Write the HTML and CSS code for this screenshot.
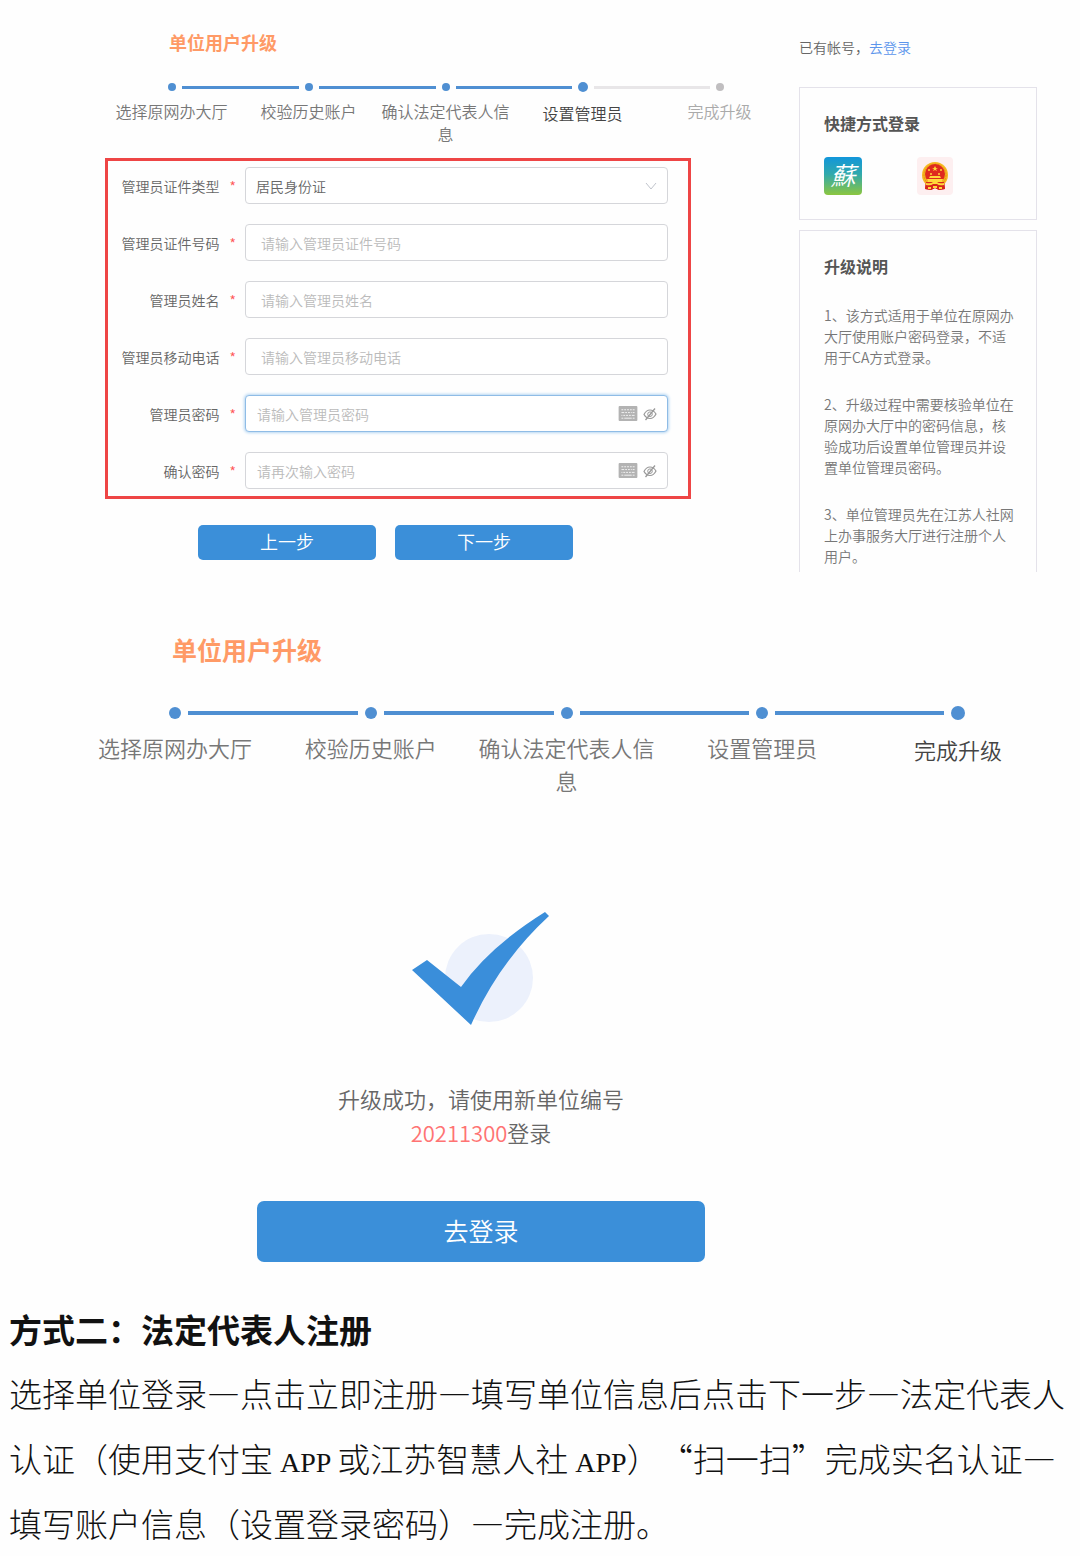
FILE: index.html
```html
<!DOCTYPE html>
<html lang="zh-CN">
<head>
  <meta charset="UTF-8">
  <meta name="viewport" content="width=device-width, initial-scale=1.0">
  <title>单位用户升级</title>
  <link rel="stylesheet" href="styles.css">
</head>
<body>
  <!-- 共用图标 -->
  <svg class="sprite" aria-hidden="true">
    <symbol id="icon-keyboard" viewBox="0 0 20 16">
      <rect x="0" y="0" width="20" height="16" rx="1" fill="#b3b3b3"/>
      <path d="M3 4h2M6 4h2M9 4h2M12 4h2M15 4h2M3 7h3M7 7h2M10 7h2M13 7h1M15 7h2M3 10h1M5 10h2M8 10h2M11 10h2M14 10h3M3 13h2M6 13h8M15 13h2" stroke="#f4f4f4" stroke-width="1" fill="none"/>
    </symbol>
    <symbol id="icon-eye-off" viewBox="0 0 14 14">
      <path d="M1 7.500C2.500 4.500 4.500 3 7 3s4.500 1.500 6 4c-1.500 3-3.500 4.500-6 4.500S2.500 10 1 7.500z" fill="none" stroke="#999" stroke-width="1.200"/>
      <circle cx="7" cy="7.200" r="2.300" fill="none" stroke="#999"/>
      <path d="M2.500 13L12 1.500" stroke="#999" stroke-width="1.300"/>
    </symbol>
  </svg>

  <section class="upgrade">
    <main class="upgrade-main">
      <h2 class="title">单位用户升级</h2>
      <ol class="steps">
        <li class="step"><div class="marker"><i class="line"></i><i class="dot"></i><i class="line"></i></div><span class="step-name">选择原网办大厅</span></li>
        <li class="step"><div class="marker"><i class="line"></i><i class="dot"></i><i class="line"></i></div><span class="step-name">校验历史账户</span></li>
        <li class="step"><div class="marker"><i class="line"></i><i class="dot"></i><i class="line"></i></div><span class="step-name">确认法定代表人信息</span></li>
        <li class="step current"><div class="marker"><i class="line"></i><i class="dot"></i><i class="line"></i></div><span class="step-name">设置管理员</span></li>
        <li class="step todo"><div class="marker"><i class="line"></i><i class="dot"></i><i class="line"></i></div><span class="step-name">完成升级</span></li>
      </ol>

      <form class="admin-form">
        <div class="fields">
          <div class="row">
            <label for="idType">管理员证件类型<span class="star">*</span></label>
            <div class="control">
              <select id="idType" name="idType">
                <option>居民身份证</option>
              </select>
              <svg class="arrow" viewBox="0 0 12 8" aria-hidden="true"><path d="M1 1l5 6 5-6" fill="none" stroke="#c0c4cc"/></svg>
            </div>
          </div>
          <div class="row">
            <label for="idNumber">管理员证件号码<span class="star">*</span></label>
            <div class="control"><input type="text" id="idNumber" name="idNumber" placeholder="请输入管理员证件号码"></div>
          </div>
          <div class="row">
            <label for="adminName">管理员姓名<span class="star">*</span></label>
            <div class="control"><input type="text" id="adminName" name="adminName" placeholder="请输入管理员姓名"></div>
          </div>
          <div class="row">
            <label for="phone">管理员移动电话<span class="star">*</span></label>
            <div class="control"><input type="text" id="phone" name="phone" placeholder="请输入管理员移动电话"></div>
          </div>
          <div class="row">
            <label for="password">管理员密码<span class="star">*</span></label>
            <div class="control active">
              <input type="password" class="password" id="password" name="password" placeholder="请输入管理员密码">
              <button type="button" class="tool" aria-label="软键盘"><svg class="keyboard"><use href="#icon-keyboard"/></svg></button>
              <button type="button" class="tool" aria-label="显示密码"><svg class="eye"><use href="#icon-eye-off"/></svg></button>
            </div>
          </div>
          <div class="row">
            <label for="confirm">确认密码<span class="star">*</span></label>
            <div class="control">
              <input type="password" class="password" id="confirm" name="confirm" placeholder="请再次输入密码">
              <button type="button" class="tool" aria-label="软键盘"><svg class="keyboard"><use href="#icon-keyboard"/></svg></button>
              <button type="button" class="tool" aria-label="显示密码"><svg class="eye"><use href="#icon-eye-off"/></svg></button>
            </div>
          </div>
        </div>
        <div class="actions">
          <button type="button" class="btn">上一步</button>
          <button type="button" class="btn">下一步</button>
        </div>
      </form>
    </main>

    <aside class="side">
      <p class="has-account">已有帐号，<a href="#">去登录</a></p>
      <div class="card quick">
        <h3>快捷方式登录</h3>
        <div class="logos">
          <a href="#" aria-label="江苏政务"><svg class="logo" viewBox="0 0 38 38">
            <defs>
              <linearGradient id="su" x1="0" y1="0" x2="0" y2="1">
                <stop offset="0" stop-color="#1296db"/>
                <stop offset="0.450" stop-color="#30a9ac"/>
                <stop offset="1" stop-color="#8cc63f"/>
              </linearGradient>
            </defs>
            <rect width="38" height="38" rx="4" fill="url(#su)"/>
            <text class="su" x="19" y="28" text-anchor="middle">蘇</text>
          </svg></a>
          <a href="#" aria-label="国家政务"><svg class="logo" viewBox="0 0 38 38">
            <rect x="1" width="36" height="38" rx="4" fill="#fdeff0"/>
            <path d="M10 24l-1 8 6 1 4-2 4 2 6-1-1-8z" fill="#d8261c"/>
            <circle cx="19" cy="18" r="13" fill="#f5b91e"/>
            <circle cx="19" cy="18" r="11" fill="none" stroke="#e8901c" stroke-dasharray="2 1"/>
            <circle cx="19" cy="17" r="10" fill="#df2a1e"/>
            <path d="M19 9l1 2h2l-2 1 1 2-2-1-2 1 1-2-2-1h2z" fill="#ffd83a"/>
            <g fill="#ffd83a">
              <circle cx="13" cy="13" r="1"/><circle cx="25" cy="13" r="1"/>
              <circle cx="15" cy="17" r="1"/><circle cx="23" cy="17" r="1"/>
              <path d="M14 19h10l1 2H13zM11 22h16l-1 3H12z"/>
            </g>
            <path d="M10 25h18l1 7-6 1-4-2-4 2-6-1z" fill="#d8261c"/>
            <g fill="#ffd83a">
              <path d="M10 26q5 1 7-1h4q2 2 7 1v2q-5 1-7-1h-4q-2 2-7 1z"/>
              <path d="M12 30h3v2h-3zM23 30h3v2h-3zM17 29h4v2h-4z"/>
            </g>
          </svg></a>
        </div>
      </div>
      <div class="card notes">
        <h3>升级说明</h3>
        <p>1、该方式适用于单位在原网办大厅使用账户密码登录，不适用于CA方式登录。</p>
        <p>2、升级过程中需要核验单位在原网办大厅中的密码信息，核验成功后设置单位管理员并设置单位管理员密码。</p>
        <p>3、单位管理员先在江苏人社网上办事服务大厅进行注册个人用户。</p>
      </div>
    </aside>
  </section>

  <!-- 升级完成 -->
  <section class="done">
    <h2 class="title">单位用户升级</h2>
    <ol class="steps large">
      <li class="step"><div class="marker"><i class="line"></i><i class="dot"></i><i class="line"></i></div><span class="step-name">选择原网办大厅</span></li>
      <li class="step"><div class="marker"><i class="line"></i><i class="dot"></i><i class="line"></i></div><span class="step-name">校验历史账户</span></li>
      <li class="step"><div class="marker"><i class="line"></i><i class="dot"></i><i class="line"></i></div><span class="step-name">确认法定代表人信息</span></li>
      <li class="step"><div class="marker"><i class="line"></i><i class="dot"></i><i class="line"></i></div><span class="step-name">设置管理员</span></li>
      <li class="step current"><div class="marker"><i class="line"></i><i class="dot"></i><i class="line"></i></div><span class="step-name">完成升级</span></li>
    </ol>
    <div class="result">
      <svg class="check" viewBox="20 20 140 117" aria-hidden="true">
        <circle cx="98" cy="88" r="44" fill="#ecf1fc"/>
        <path d="M21 80L36 70L70 97Q98 57 154 22L158 26Q108 72 80 135z" fill="#3a8eda"/>
      </svg>
      <p>升级成功，请使用新单位编号<br><span class="code">20211300</span>登录</p>
      <button type="button" class="btn btn-login">去登录</button>
    </div>
  </section>

  <article class="guide">
    <h1>方式二：法定代表人注册</h1>
    <p>选择单位登录—点击立即注册—填写单位信息后点击下一步—法定代表人认证（使用支付宝<span class="latin"> APP </span>或江苏智慧人社<span class="latin"> APP</span>）“扫一扫”完成实名认证—填写账户信息（设置登录密码）—完成注册。</p>
  </article>
</body>
</html>
```

FILE: styles.css
```css
* {
  margin: 0;
  padding: 0;
  box-sizing: border-box;
}

body {
  font-family: "Noto Sans CJK SC", sans-serif;
  font-size: 14px;
  font-weight: 350;
  color: #666;
  background: #fefefe;
}

button,
input,
select {
  font-family: inherit;
  font-size: 14px;
  font-weight: inherit;
}

a {
  color: #5b95ec;
  text-decoration: none;
}

.sprite {
  display: none;
}

.upgrade {
  display: grid;
  grid-template-columns: 1fr 238px;
  padding: 29px 43px 0 0;
}

.title {
  margin-left: 169px;
  font-size: 18px;
  line-height: 26px;
  color: #ff9a66;
}

/* Steps */
.steps {
  display: grid;
  grid-template-columns: repeat(5, 1fr);
  margin: 27px 11px 12px 103px;
  list-style: none;
  font-size: 16px;
  line-height: 23px;
  text-align: center;
  color: #777;
}

.marker {
  display: flex;
  align-items: center;
  gap: 6px;
  height: 10px;
  margin-bottom: 8px;
}

.dot {
  width: 8px;
  height: 8px;
  border-radius: 50%;
  background: #4f8fd2;
}

.line {
  flex: 1;
  height: 3px;
  background: #4f8fd2;
}

.step:first-child .line:first-child,
.step:last-child .line:last-child {
  visibility: hidden;
}

.step-name {
  display: block;
}

.current .dot {
  width: 10px;
  height: 10px;
}

.current .step-name {
  padding-top: 2px;
  color: #444;
}

.current .line:last-child,
.todo .line {
  background: #e8e6e8;
}

.todo .dot {
  background: #c0bec0;
}

.todo .step-name {
  color: #aaa;
}

/* Form */
.fields {
  display: flex;
  flex-direction: column;
  gap: 20px;
  margin: 0 108px 0 105px;
  padding: 6px 20px 7px 0;
  border: 3px solid #ee4545;
}

.row {
  display: flex;
  align-items: center;
  gap: 9px;
}

.row label {
  flex: 0 0 128px;
  text-align: right;
  white-space: nowrap;
}

.star {
  margin-left: 10px;
  color: #f55;
}

.control {
  flex: 1;
  display: flex;
  align-items: center;
  height: 37px;
  padding-right: 10px;
  border: 1px solid #d5d6da;
  border-radius: 4px;
  background: #fff;
}

.control.active {
  border-color: #8fbce6;
  box-shadow: 0 0 3px 1px #b5d6f2;
}

.control input,
.control select {
  flex: 1;
  min-width: 0;
  height: 100%;
  padding-left: 15px;
  border: none;
  outline: none;
  background: transparent;
  color: #666;
}

.control select {
  padding-left: 10px;
  appearance: none;
}

.control .password {
  padding-left: 11px;
}

.control input::placeholder {
  color: #bbb;
}

.arrow {
  width: 12px;
  height: 8px;
}

.tool {
  display: flex;
  margin-left: 5px;
  border: none;
  background: none;
  cursor: pointer;
}

.keyboard {
  width: 20px;
  height: 15px;
}

.eye {
  width: 14px;
  height: 14px;
}

.actions {
  display: flex;
  gap: 19px;
  margin: 26px 226px 0 198px;
}

.btn {
  flex: 1;
  height: 35px;
  padding-bottom: 3px;
  border: none;
  border-radius: 5px;
  background: #3b8fd9;
  color: #fff;
  font-size: 18px;
  cursor: pointer;
}

/* Right column */
.has-account {
  margin-top: 8px;
  line-height: 21px;
}

.card {
  padding: 22px 20px 5px 24px;
  border: 1px solid #e4e2ea;
}

.card h3 {
  font-size: 16px;
  line-height: 26px;
  color: #555;
}

.quick {
  margin: 29px 0 10px;
  padding-bottom: 24px;
}

.logos {
  display: flex;
  gap: 54px;
  margin-top: 21px;
}

.logos a {
  display: flex;
}

.logo {
  width: 38px;
  height: 38px;
}

.su {
  font-size: 25px;
  font-style: italic;
  fill: #fff;
}

.notes {
  border-bottom: none;
}

.notes p {
  margin-top: 26px;
  line-height: 21px;
  color: #777;
}

/* Result */
.done {
  margin-top: 58px;
}

.done .title {
  margin-left: 172px;
  font-size: 25px;
  line-height: 38px;
}

.steps.large {
  margin: 38px 24px 0 77px;
  font-size: 22px;
  line-height: 33px;
}

.large .marker {
  gap: 7px;
  height: 14px;
  margin-bottom: 11px;
}

.large .dot {
  width: 12px;
  height: 12px;
}

.large .current .dot {
  width: 14px;
  height: 14px;
}

.large .line {
  height: 4px;
}

.result {
  display: flex;
  flex-direction: column;
  align-items: center;
  margin: 113px 375px 0 257px;
  font-size: 22px;
  line-height: 34px;
  text-align: center;
}

.check {
  width: 140px;
  height: 117px;
}

.result p {
  margin: 54px 0 52px;
}

.code {
  color: #ff7373;
}

.btn-login {
  flex: none;
  width: 100%;
  height: 61px;
  border-radius: 7px;
  font-size: 25px;
}

/* Guide text */
.guide {
  margin-top: 35px;
  padding: 0 8px 0 9px;
  color: #111;
  font-size: 33px;
  text-spacing-trim: space-all;
}

.guide h1 {
  font-size: 33px;
  line-height: 64px;
}

.guide p {
  font-weight: 300;
  line-height: 65px;
}

.latin {
  font-family: "Liberation Serif", serif;
  font-size: 28px;
  line-height: 1;
}
```
